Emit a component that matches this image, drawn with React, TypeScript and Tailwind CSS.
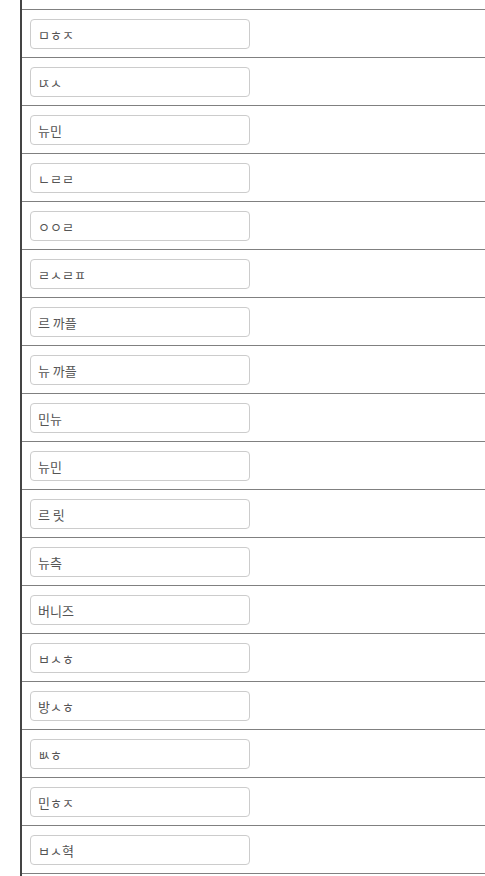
const names = [
  "ㅁㅎㅈ",
  "ㄵㅅ",
  "뉴민",
  "ㄴㄹㄹ",
  "ㅇㅇㄹ",
  "ㄹㅅㄹㅍ",
  "르 까플",
  "뉴 까플",
  "민뉴",
  "뉴민",
  "르 릿",
  "뉴측",
  "버니즈",
  "ㅂㅅㅎ",
  "방ㅅㅎ",
  "ㅄㅎ",
  "민ㅎㅈ",
  "ㅂㅅ혁",
];

export default function App() {
  return (
    <div
      className="h-[876px] w-[485px] overflow-hidden bg-white"
      style={{ fontFamily: '"Noto Sans CJK KR", "Noto Sans", sans-serif' }}
    >
      <div className="ml-[20px] border-l-2 border-[#444]">
        <div className="h-[9px]" />
        {names.map((name, i) => (
          <div key={i} className="border-t border-[#808080] pl-[8px] pt-[9px] pb-[8px]">
            <input
              type="text"
              defaultValue={name}
              className="block h-[30px] w-[220px] rounded-[4px] border border-[#ccc] bg-white px-[7px] text-[13px] text-[#555] outline-none"
            />
          </div>
        ))}
        <div className="h-[20px] border-t border-[#808080]" />
      </div>
    </div>
  );
}
